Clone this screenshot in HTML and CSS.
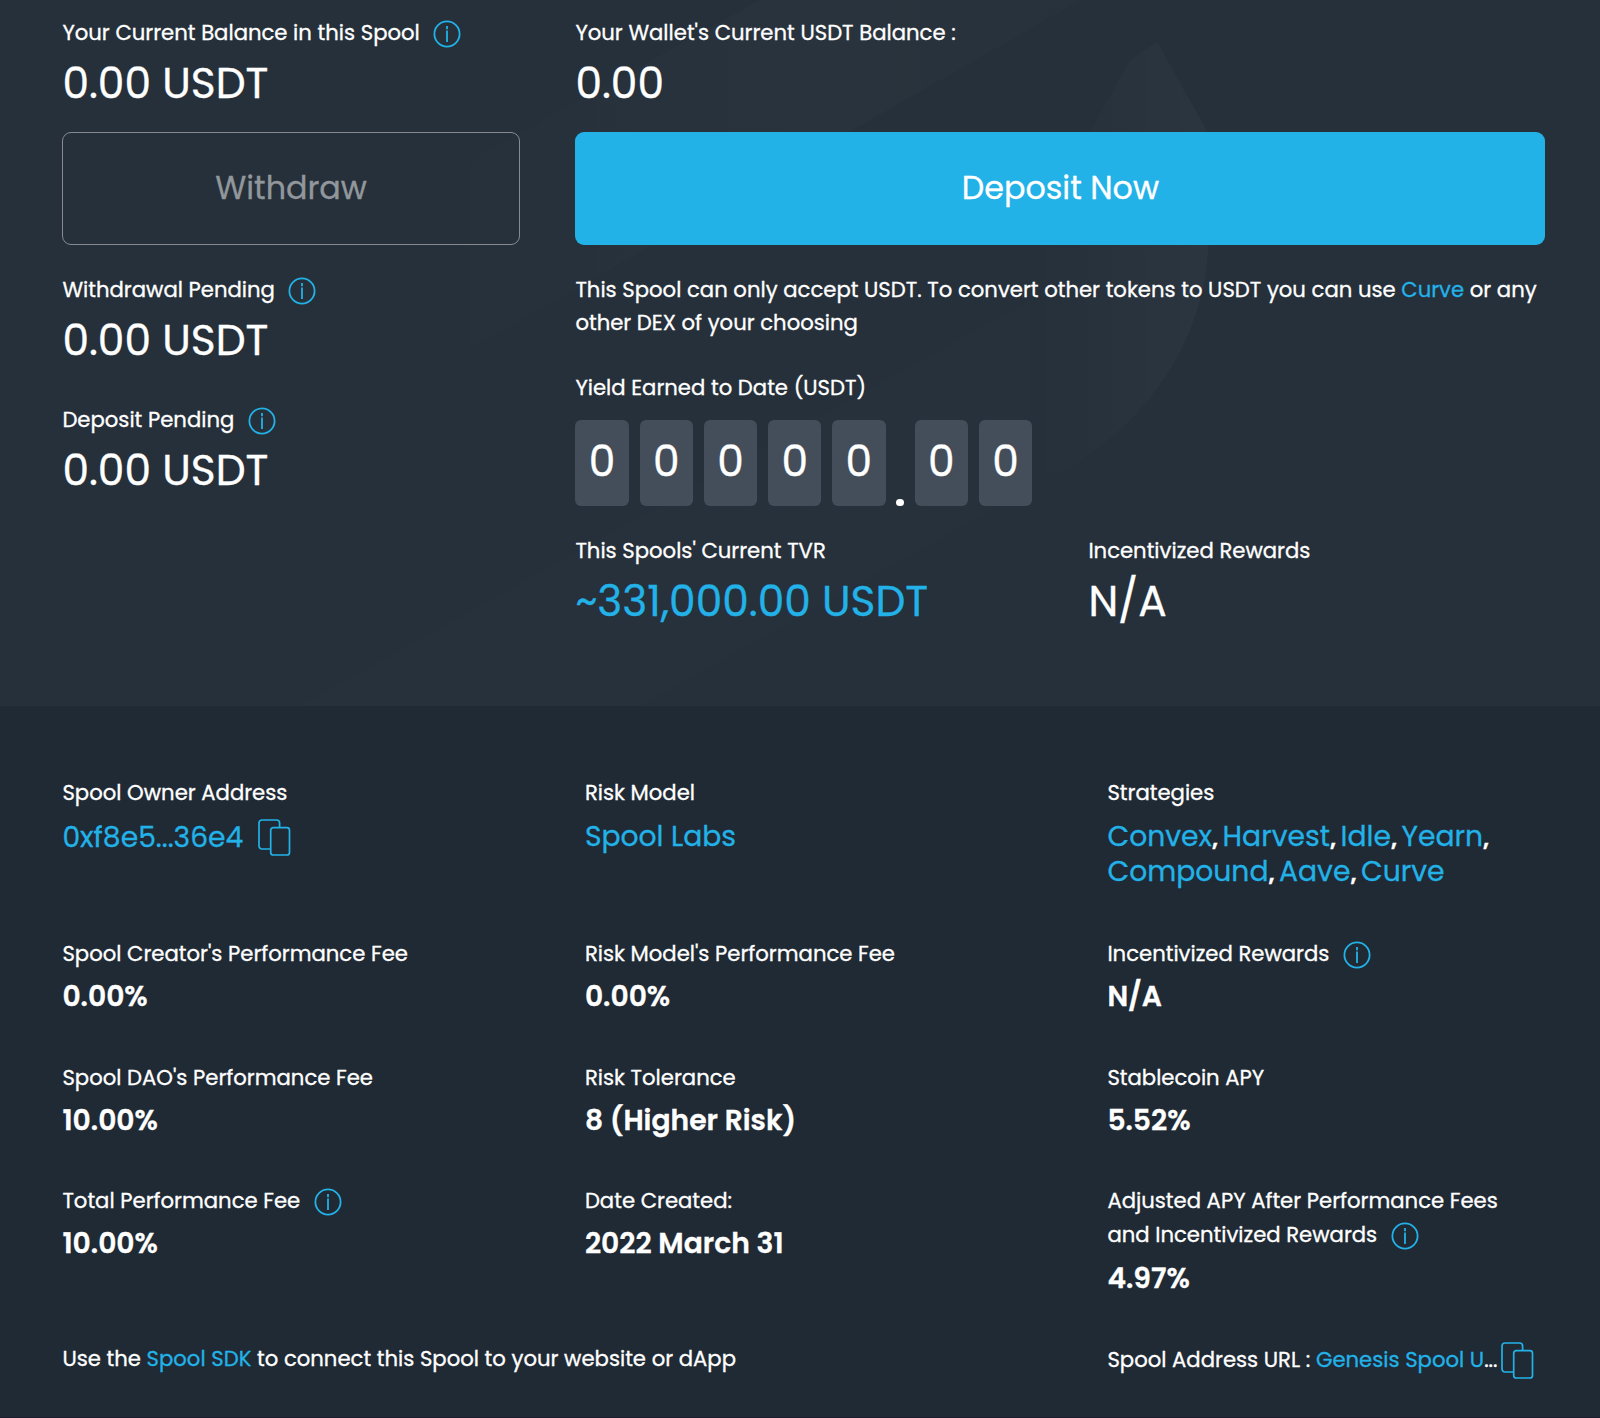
FILE: index.html
```html
<!DOCTYPE html>
<html lang="en">
<head>
    <meta charset="UTF-8">
    <meta name="viewport" content="width=device-width, initial-scale=1.0">
    <title>Spool</title>
    <link rel="stylesheet" href="styles.css">
</head>
<body>
    <!-- shared icons -->
    <svg class="sprite" width="0" height="0">
        <symbol id="icon-info" viewBox="0 0 28 28">
            <circle cx="14" cy="14" r="12.6" fill="none" stroke="currentColor" stroke-width="1.8"/>
            <path d="M14 5.9v3.4M14 10.6v11.4" fill="none" stroke="currentColor" stroke-width="1.8"/>
        </symbol>
        <symbol id="icon-copy" viewBox="0 0 33 37">
            <path d="M12.4 30H4a3 3 0 0 1-3-3V4a3 3 0 0 1 3-3h14.6a3 3 0 0 1 3 3v4.5" fill="none" stroke="currentColor" stroke-width="1.7"/>
            <rect x="12.7" y="8.6" width="18.8" height="27.4" rx="2.6" fill="none" stroke="currentColor" stroke-width="1.7"/>
        </symbol>
    </svg>

    <section class="overview">
        <svg class="overview-bg" viewBox="0 0 1600 706" preserveAspectRatio="none">
            <defs>
                <linearGradient id="band" gradientUnits="userSpaceOnUse" x1="400" y1="0" x2="1080" y2="0">
                    <stop offset="0" stop-color="#fff" stop-opacity="0"/>
                    <stop offset="0.6" stop-color="#fff" stop-opacity="0.015"/>
                    <stop offset="1" stop-color="#fff" stop-opacity="0.008"/>
                </linearGradient>
                <linearGradient id="leaf" gradientUnits="userSpaceOnUse" x1="1030" y1="0" x2="1200" y2="0">
                    <stop offset="0" stop-color="#fff" stop-opacity="0"/>
                    <stop offset="1" stop-color="#fff" stop-opacity="0.025"/>
                </linearGradient>
            </defs>
            <path d="M400 200L760 0H1080L400 389Z" fill="url(#band)"/>
            <path d="M1130 60L1157 42L1207 131Q1214 190 1207 262C1198 350 1140 430 1060 472L1030 489V240Z" fill="url(#leaf)"/>
            <path d="M1030 489L640 706H300L1030 300Z" fill="#fff" fill-opacity="0.006"/>
        </svg>

        <div class="balances">
            <div class="item">
                <p class="label"><span>Your Current Balance in this Spool</span><svg class="info"><use href="#icon-info"/></svg></p>
                <p class="amount">0.00 USDT</p>
            </div>
            <button class="btn btn-outline" disabled>Withdraw</button>
            <div class="item">
                <p class="label"><span>Withdrawal Pending</span><svg class="info"><use href="#icon-info"/></svg></p>
                <p class="amount">0.00 USDT</p>
            </div>
            <div class="item item-deposit">
                <p class="label"><span>Deposit Pending</span><svg class="info"><use href="#icon-info"/></svg></p>
                <p class="amount">0.00 USDT</p>
            </div>
        </div>

        <div class="wallet">
            <div class="item">
                <p class="label">Your Wallet's Current USDT Balance :</p>
                <p class="amount">0.00</p>
            </div>
            <button class="btn btn-primary">Deposit Now</button>
            <p class="note">This Spool can only accept USDT. To convert other tokens to USDT you can use <a>Curve</a> or any<br>other DEX of your choosing</p>
            <p class="label yield-label">Yield Earned to Date (USDT)</p>
            <div class="counter">
                <span class="digit">0</span>
                <span class="digit">0</span>
                <span class="digit">0</span>
                <span class="digit">0</span>
                <span class="digit">0</span>
                <span class="dot"></span>
                <span class="digit">0</span>
                <span class="digit">0</span>
            </div>
            <div class="totals">
                <div>
                    <p class="label">This Spools' Current TVR</p>
                    <p class="amount tvr">~331,000.00 USDT</p>
                </div>
                <div>
                    <p class="label">Incentivized Rewards</p>
                    <p class="amount">N/A</p>
                </div>
            </div>
        </div>
    </section>

    <section class="details">
        <div class="cell">
            <p class="label">Spool Owner Address</p>
            <p class="link-value address"><a>0xf8e5...36e4</a><svg class="copy"><use href="#icon-copy"/></svg></p>
        </div>
        <div class="cell">
            <p class="label">Risk Model</p>
            <p class="link-value"><a>Spool Labs</a></p>
        </div>
        <div class="cell">
            <p class="label">Strategies</p>
            <p class="link-value"><a>Convex</a>, <a>Harvest</a>, <a>Idle</a>, <a>Yearn</a>,<br><a>Compound</a>, <a>Aave</a>, <a>Curve</a></p>
        </div>

        <div class="cell">
            <p class="label">Spool Creator's Performance Fee</p>
            <p class="value">0.00%</p>
        </div>
        <div class="cell">
            <p class="label">Risk Model's Performance Fee</p>
            <p class="value">0.00%</p>
        </div>
        <div class="cell">
            <p class="label"><span>Incentivized Rewards</span><svg class="info"><use href="#icon-info"/></svg></p>
            <p class="value">N/A</p>
        </div>

        <div class="cell">
            <p class="label">Spool DAO's Performance Fee</p>
            <p class="value">10.00%</p>
        </div>
        <div class="cell">
            <p class="label">Risk Tolerance</p>
            <p class="value">8 (Higher Risk)</p>
        </div>
        <div class="cell">
            <p class="label">Stablecoin APY</p>
            <p class="value">5.52%</p>
        </div>

        <div class="cell">
            <p class="label"><span>Total Performance Fee</span><svg class="info"><use href="#icon-info"/></svg></p>
            <p class="value">10.00%</p>
        </div>
        <div class="cell">
            <p class="label">Date Created:</p>
            <p class="value">2022 March 31</p>
        </div>
        <div class="cell">
            <p class="label">Adjusted APY After Performance Fees</p>
            <p class="label second-line"><span>and Incentivized Rewards</span><svg class="info"><use href="#icon-info"/></svg></p>
            <p class="value">4.97%</p>
        </div>

        <p class="label sdk">Use the&nbsp;<a>Spool SDK</a>&nbsp;to connect this Spool to your website or dApp</p>
        <p class="label url">Spool Address URL :&nbsp;<a>Genesis Spool U</a>...<svg class="copy"><use href="#icon-copy"/></svg></p>
    </section>
</body>
</html>
```

FILE: styles.css
```css
* {
    box-sizing: border-box;
}

body {
    margin: 0;
    font-family: 'Poppins', 'Inter', sans-serif;
    font-size: 21.18px;
    color: #fff;
    background-color: #202a34;
    -webkit-text-stroke: 0.3px;
}

p {
    margin: 0;
}

a {
    color: #22b2e8;
}

.sprite {
    display: block;
}

.overview {
    position: relative;
    display: grid;
    grid-template-columns: 457.4px 970px;
    column-gap: 55.6px;
    height: 706px;
    padding: 16px 0 0 62.4px;
    background-color: #26303a;
}

.overview-bg {
    position: absolute;
    top: 0;
    left: 0;
    width: 100%;
    height: 100%;
}

.balances,
.wallet {
    position: relative;
}

.label {
    display: flex;
    align-items: center;
    height: 33px;
    line-height: 33px;
    white-space: nowrap;
}

.amount {
    margin-top: 10px;
    font-size: 42.3px;
    line-height: 50px;
    white-space: nowrap;
}

.info {
    flex: none;
    width: 28px;
    height: 28px;
    margin-left: 13.5px;
    margin-top: 2px;
    color: #22b2e8;
}

.copy {
    flex: none;
    width: 33px;
    height: 37px;
    color: #22b2e8;
}

.btn {
    display: block;
    width: 100%;
    height: 113px;
    margin: 23px 0 28px;
    padding: 0;
    font-family: inherit;
    font-size: 31.8px;
    border-radius: 9px;
    -webkit-text-stroke: 0.3px;
}

.btn-outline {
    color: #92979c;
    background: transparent;
    border: 1px solid #868b91;
}

.btn-primary {
    color: #fff;
    background-color: #22b2e8;
    border: none;
}

.item-deposit {
    margin-top: 37px;
}

.note {
    line-height: 33px;
    white-space: nowrap;
}

.yield-label {
    margin-top: 32px;
}

.counter {
    display: flex;
    gap: 10.7px;
    margin-top: 16px;
}

.digit {
    width: 53.5px;
    height: 86px;
    font-size: 42.3px;
    line-height: 84px;
    text-align: center;
    background-color: #444e5a;
    border-radius: 6px;
}

.dot {
    align-self: flex-end;
    width: 7.5px;
    height: 7.5px;
    border-radius: 50%;
    background-color: #fff;
}

.totals {
    display: grid;
    grid-template-columns: 513px 1fr;
    margin-top: 28px;
}

.tvr {
    color: #22b2e8;
}

.details {
    display: grid;
    grid-template-columns: 522.5px 522.5px 1fr;
    grid-template-rows: 161px 124px 123px 158px 1fr;
    height: 712px;
    padding: 70px 0 0 62.4px;
    border-bottom: 1px solid #1c1b2c;
}

.link-value {
    margin-top: 11px;
    line-height: 33.2px;
    font-weight: 700;
    white-space: nowrap;
}

.link-value a {
    font-size: 28.2px;
    font-weight: 400;
}

.address {
    display: flex;
    align-items: center;
}

.address .copy {
    margin: -1px 0 0 15px;
}

.value {
    margin-top: 8px;
    font-size: 28.2px;
    font-weight: 600;
    line-height: 36px;
}

.second-line {
    margin-top: 1px;
}

.second-line + .value {
    margin-top: 9px;
}

.url {
    grid-column: 3;
    margin-top: 1px;
}

.url .copy {
    margin: 2px 0 0 4px;
}
```
